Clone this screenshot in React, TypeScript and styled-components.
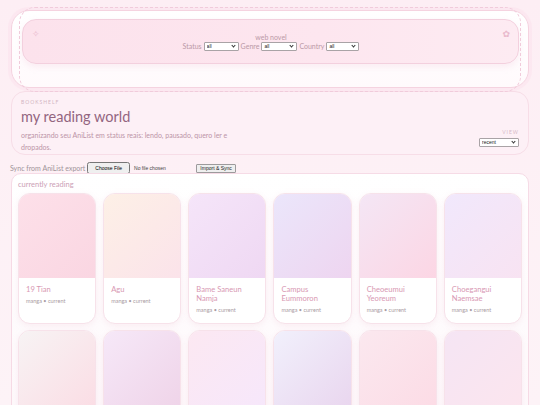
import styled, { createGlobalStyle } from 'styled-components';

type Book = {
  title: string;
  from: string;
  to: string;
};

const books: Book[] = [
  { title: '19 Tian', from: '#fde0e9', to: '#fad6e2' },
  { title: 'Agu', from: '#fdf0e6', to: '#fbe3ea' },
  { title: 'Bame Saneun Namja', from: '#f5e5f9', to: '#efd8f3' },
  { title: 'Campus Eummoron', from: '#ebe6fb', to: '#eed5f0' },
  { title: 'Cheoeumui Yeoreum', from: '#f4e6f5', to: '#fcd6e4' },
  { title: 'Choegangui Naemsae', from: '#f1e8fc', to: '#f8e3f2' },
  { title: 'Daehakgyo Byeolgok', from: '#f7f3f4', to: '#fbdce4' },
  { title: 'Dalbit Jogak', from: '#f6e8f8', to: '#efd3e8' },
  { title: 'Eoneu Nal Gapjagi', from: '#fce8f2', to: '#f6e7fb' },
  { title: 'Gyeoul Sonyeon', from: '#f1f0fc', to: '#e9d5ee' },
  { title: 'Haneul Jeongwon', from: '#fbe8ef', to: '#fcdbe5' },
  { title: 'Insaeng Hoegwi', from: '#f5e5f4', to: '#fce5ee' },
];

const GlobalStyle = createGlobalStyle`
  html, body {
    margin: 0;
    padding: 0;
  }

  body {
    font-family: Lato, "Noto Sans", sans-serif;
    background: linear-gradient(180deg, #fdeef4 0%, #fdf3f7 100%);
    height: 405px;
    overflow: hidden;
  }
`;

const Page = styled.div`
  padding: 10px 11px 0;
  display: flex;
  flex-direction: column;
`;

const HeaderCard = styled.header`
  position: relative;
  height: 78px;
  box-sizing: border-box;
  padding: 8px 9px 0 10px;
  border: 1px solid #f5d3e0;
  border-radius: 18px;
  background: linear-gradient(180deg, #ffffff 0%, #fffafc 100%);
  box-shadow: 0 0 0 3px rgba(252, 226, 236, 0.55);

  &::before {
    content: '';
    position: absolute;
    top: -4px;
    bottom: -5px;
    left: 7px;
    right: 7px;
    border: 1px dashed #f1cbdb;
    border-radius: 16px;
    pointer-events: none;
  }
`;

const Banner = styled.div`
  height: 45px;
  box-sizing: border-box;
  padding: 0 8px 0 9px;
  display: flex;
  align-items: center;
  justify-content: space-between;
  border: 1px solid #f3d0de;
  border-radius: 14px;
  background: linear-gradient(90deg, #fce2ec 0%, #fde6ef 60%, #fdebf2 100%);
  box-shadow: 0 3px 6px rgba(240, 196, 214, 0.25);
`;

const Sparkle = styled.span`
  align-self: flex-start;
  margin-top: 9px;
  font-size: 9px;
  line-height: 10px;
  color: #e9b9cc;
  font-family: "DejaVu Sans", sans-serif;
`;

const FilterBlock = styled.div`
  display: flex;
  flex-direction: column;
  align-items: center;
  color: #bb99a6;
  font-size: 7px;
  line-height: 9px;
`;

const FilterRow = styled.div`
  display: flex;
  align-items: center;
  gap: 2px;
`;

const SelectWrap = styled.span`
  position: relative;
  display: inline-flex;

  &::after {
    content: '';
    position: absolute;
    right: 4px;
    top: 2px;
    width: 2px;
    height: 2px;
    border-right: 1px solid #333;
    border-bottom: 1px solid #333;
    transform: rotate(45deg);
    pointer-events: none;
  }
`;

const TinySelect = styled.select<{ $w: number }>`
  appearance: none;
  width: ${(p) => p.$w}px;
  height: 9px;
  padding: 0 2px;
  font-size: 5px;
  line-height: 7px;
  font-family: "Liberation Sans", sans-serif;
  border: 1px solid #a9a3a6;
  border-radius: 1px;
  background: #fff;
  color: #222;
  box-sizing: border-box;
`;

const ShelfCard = styled.section`
  margin-top: 3px;
  height: 64px;
  box-sizing: border-box;
  padding: 7px 9px 0 9px;
  display: flex;
  justify-content: space-between;
  border: 1px solid #f7dde7;
  border-radius: 14px;
  background: #fdf0f6;
`;

const ShelfText = styled.div`
  display: flex;
  flex-direction: column;
`;

const Eyebrow = styled.span`
  font-size: 5px;
  line-height: 6px;
  letter-spacing: 1px;
  color: #d2b5c2;
  text-transform: uppercase;
`;

const ShelfTitle = styled.h1`
  margin: 2px 0 0;
  font-size: 14.5px;
  line-height: 20px;
  font-weight: 400;
  color: #936580;
`;

const ShelfDesc = styled.p`
  margin: 2px 0 0;
  max-width: 215px;
  font-size: 7px;
  line-height: 12px;
  color: #bc94a7;
`;

const ViewBox = styled.div`
  display: flex;
  flex-direction: column;
  align-items: flex-end;
  justify-content: flex-end;
  padding-bottom: 7px;
  gap: 3px;
`;

const ViewLabel = styled.span`
  font-size: 5px;
  letter-spacing: 1px;
  color: #d6bac7;
`;

const SyncRow = styled.div`
  margin-top: 8px;
  display: flex;
  align-items: center;
  gap: 2px;
  font-size: 7px;
  color: #a0949a;
  margin-left: -1px;
  height: 10px;
`;

const FileInput = styled.input`
  width: 107px;
  font-size: 5px;
  font-family: "Liberation Sans", sans-serif;
  color: #444;
`;

const SyncButton = styled.button`
  height: 9px;
  padding: 0 3px;
  font-size: 5px;
  font-family: "Liberation Sans", sans-serif;
  color: #222;
  border: 1px solid #9d9a9c;
  border-radius: 1px;
  background: #efefef;
`;

const Panel = styled.main`
  margin-top: 0;
  padding: 6px 6px 10px;
  border: 1px solid #f6dbe6;
  border-radius: 10px;
  background: linear-gradient(180deg, #ffffff 0%, #fdf7fa 100%);
`;

const PanelTitle = styled.h2`
  margin: 0 0 3px 0;
  font-size: 7.5px;
  line-height: 10px;
  font-weight: 400;
  color: #cc9fb6;
`;

const Grid = styled.div`
  display: grid;
  grid-template-columns: repeat(6, 1fr);
  gap: 6px 7px;
`;

const Card = styled.article`
  display: flex;
  flex-direction: column;
  border: 1px solid #f7e2ea;
  border-radius: 12px;
  overflow: hidden;
  background: #fff;
  box-shadow: 0 2px 6px rgba(238, 190, 210, 0.22);
`;

const Cover = styled.div<{ $from: string; $to: string }>`
  height: 84px;
  background: linear-gradient(135deg, ${(p) => p.$from} 0%, ${(p) => p.$to} 100%);
`;

const Info = styled.div`
  padding: 7px 7px 9px 7px;
`;

const BookTitle = styled.div`
  font-size: 7.6px;
  line-height: 9px;
  color: #d898b3;
`;

const Meta = styled.div`
  margin-top: 4px;
  font-size: 5.5px;
  line-height: 7px;
  color: #a99ba2;
`;

export default function App() {
  return (
    <>
      <GlobalStyle />
      <Page>
        <HeaderCard>
          <Banner>
            <Sparkle>✧</Sparkle>
            <FilterBlock>
              <span>web novel</span>
              <FilterRow>
                Status
                <SelectWrap>
                  <TinySelect $w={35}>
                    <option>all</option>
                  </TinySelect>
                </SelectWrap>
                Genre
                <SelectWrap>
                  <TinySelect $w={36}>
                    <option>all</option>
                  </TinySelect>
                </SelectWrap>
                Country
                <SelectWrap>
                  <TinySelect $w={33}>
                    <option>all</option>
                  </TinySelect>
                </SelectWrap>
              </FilterRow>
            </FilterBlock>
            <Sparkle>✿</Sparkle>
          </Banner>
        </HeaderCard>

        <ShelfCard>
          <ShelfText>
            <Eyebrow>Bookshelf</Eyebrow>
            <ShelfTitle>my reading world</ShelfTitle>
            <ShelfDesc>
              organizando seu AniList em status reais: lendo, pausado, quero ler e dropados.
            </ShelfDesc>
          </ShelfText>
          <ViewBox>
            <ViewLabel>VIEW</ViewLabel>
            <SelectWrap>
              <TinySelect $w={40}>
                <option>recent</option>
              </TinySelect>
            </SelectWrap>
          </ViewBox>
        </ShelfCard>

        <SyncRow>
          Sync from AniList export
          <FileInput type="file" />
          <SyncButton>Import &amp; Sync</SyncButton>
        </SyncRow>

        <Panel>
          <PanelTitle>currently reading</PanelTitle>
          <Grid>
            {books.map((b) => (
              <Card key={b.title}>
                <Cover $from={b.from} $to={b.to} />
                <Info>
                  <BookTitle>{b.title}</BookTitle>
                  <Meta>manga • current</Meta>
                </Info>
              </Card>
            ))}
          </Grid>
        </Panel>
      </Page>
    </>
  );
}
